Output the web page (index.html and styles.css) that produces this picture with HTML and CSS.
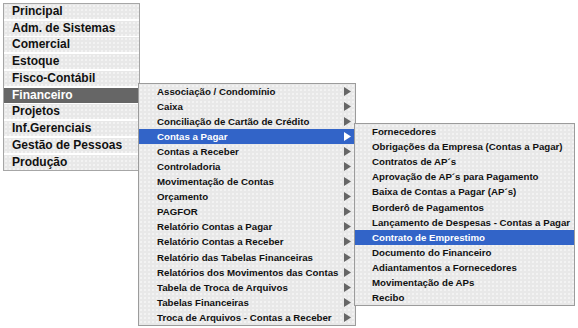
FILE: index.html
```html
<!DOCTYPE html>
<html lang="pt-BR">

<head>
    <meta charset="UTF-8">
    <meta name="viewport" content="width=device-width, initial-scale=1.0">
    <title>Menu</title>
    <link rel="stylesheet" href="styles.css">
</head>

<body>
    <div class="menubar">
        <ul class="menu main">
            <li class="item">Principal</li>
            <li class="item">Adm. de Sistemas</li>
            <li class="item">Comercial</li>
            <li class="item">Estoque</li>
            <li class="item">Fisco-Contábil</li>
            <li class="item open">Financeiro</li>
            <li class="item">Projetos</li>
            <li class="item">Inf.Gerenciais</li>
            <li class="item">Gestão de Pessoas</li>
            <li class="item">Produção</li>
        </ul>

        <ul class="menu sub sub1">
            <li class="item">Associação / Condomínio<svg class="arrow" viewBox="0 0 7 9"><polygon points="0,0 7,4.5 0,9"/></svg></li>
            <li class="item">Caixa<svg class="arrow" viewBox="0 0 7 9"><polygon points="0,0 7,4.5 0,9"/></svg></li>
            <li class="item">Conciliação de Cartão de Crédito<svg class="arrow" viewBox="0 0 7 9"><polygon points="0,0 7,4.5 0,9"/></svg></li>
            <li class="item active">Contas a Pagar<svg class="arrow" viewBox="0 0 7 9"><polygon points="0,0 7,4.5 0,9"/></svg></li>
            <li class="item">Contas a Receber<svg class="arrow" viewBox="0 0 7 9"><polygon points="0,0 7,4.5 0,9"/></svg></li>
            <li class="item">Controladoria<svg class="arrow" viewBox="0 0 7 9"><polygon points="0,0 7,4.5 0,9"/></svg></li>
            <li class="item">Movimentação de Contas<svg class="arrow" viewBox="0 0 7 9"><polygon points="0,0 7,4.5 0,9"/></svg></li>
            <li class="item">Orçamento<svg class="arrow" viewBox="0 0 7 9"><polygon points="0,0 7,4.5 0,9"/></svg></li>
            <li class="item">PAGFOR<svg class="arrow" viewBox="0 0 7 9"><polygon points="0,0 7,4.5 0,9"/></svg></li>
            <li class="item">Relatório Contas a Pagar<svg class="arrow" viewBox="0 0 7 9"><polygon points="0,0 7,4.5 0,9"/></svg></li>
            <li class="item">Relatório Contas a Receber<svg class="arrow" viewBox="0 0 7 9"><polygon points="0,0 7,4.5 0,9"/></svg></li>
            <li class="item">Relatório das Tabelas Financeiras<svg class="arrow" viewBox="0 0 7 9"><polygon points="0,0 7,4.5 0,9"/></svg></li>
            <li class="item">Relatórios dos Movimentos das Contas<svg class="arrow" viewBox="0 0 7 9"><polygon points="0,0 7,4.5 0,9"/></svg></li>
            <li class="item">Tabela de Troca de Arquivos<svg class="arrow" viewBox="0 0 7 9"><polygon points="0,0 7,4.5 0,9"/></svg></li>
            <li class="item">Tabelas Financeiras<svg class="arrow" viewBox="0 0 7 9"><polygon points="0,0 7,4.5 0,9"/></svg></li>
            <li class="item">Troca de Arquivos - Contas a Receber<svg class="arrow" viewBox="0 0 7 9"><polygon points="0,0 7,4.5 0,9"/></svg></li>
        </ul>

        <ul class="menu sub sub2">
            <li class="item">Fornecedores</li>
            <li class="item">Obrigações da Empresa (Contas a Pagar)</li>
            <li class="item">Contratos de AP´s</li>
            <li class="item">Aprovação de AP´s para Pagamento</li>
            <li class="item">Baixa de Contas a Pagar (AP´s)</li>
            <li class="item">Borderô de Pagamentos</li>
            <li class="item">Lançamento de Despesas - Contas a Pagar</li>
            <li class="item active">Contrato de Emprestimo</li>
            <li class="item">Documento do Financeiro</li>
            <li class="item">Adiantamentos a Fornecedores</li>
            <li class="item">Movimentação de APs</li>
            <li class="item">Recibo</li>
        </ul>
    </div>
</body>

</html>
```

FILE: styles.css
```css
body {
    margin: 0;
    padding: 3px;
    background-color: #ffffff;
    font-family: "Liberation Sans", Arial, sans-serif;
    font-weight: bold;
    color: #111111;
}

.menubar {
    position: relative;
    height: 322px;
}

.menu {
    list-style: none;
    margin: 0;
    padding: 0;
    box-sizing: border-box;
}

.main {
    width: 137px;
    border: 1px solid #a6a6a6;
    background-color: #ffffff;
    display: flex;
    flex-direction: column;
    gap: 1.74px;
    font-size: 12px;
}

.main > .item {
    height: 15px;
    line-height: 15px;
    padding-left: 8px;
    background-color: #e8e8e8;
    background-image: radial-gradient(#f3f3f3 0.7px, transparent 0.9px);
    background-size: 4px 4px;
}

.main > .item.open {
    background-color: #666666;
    background-image: none;
    color: #ffffff;
}

/* submenus open over the main menu */
.sub {
    position: absolute;
    border: 1px solid #9c9c9c;
    background-color: #e8e8e8;
    background-image: radial-gradient(#f3f3f3 0.7px, transparent 0.9px);
    background-size: 4px 4px;
    font-size: 9.7px;
    color: #111111;
}

.sub > .item {
    display: flex;
    align-items: center;
    justify-content: space-between;
    height: 15.1px;
    white-space: nowrap;
}

.sub > .item.active {
    background-color: #3264c8;
    color: #ffffff;
}

.sub1 {
    left: 135px;
    top: 79.5px;
    width: 218px;
    z-index: 1;
}

.sub1 > .item {
    padding: 0 4px 0 18px;
}

.sub2 {
    left: 351px;
    top: 120px;
    width: 221px;
    z-index: 2;
}

.sub2 > .item {
    padding-left: 17px;
}

.arrow {
    width: 7px;
    height: 9px;
    fill: #666666;
    flex-shrink: 0;
}

.active > .arrow {
    fill: #ffffff;
}
```
